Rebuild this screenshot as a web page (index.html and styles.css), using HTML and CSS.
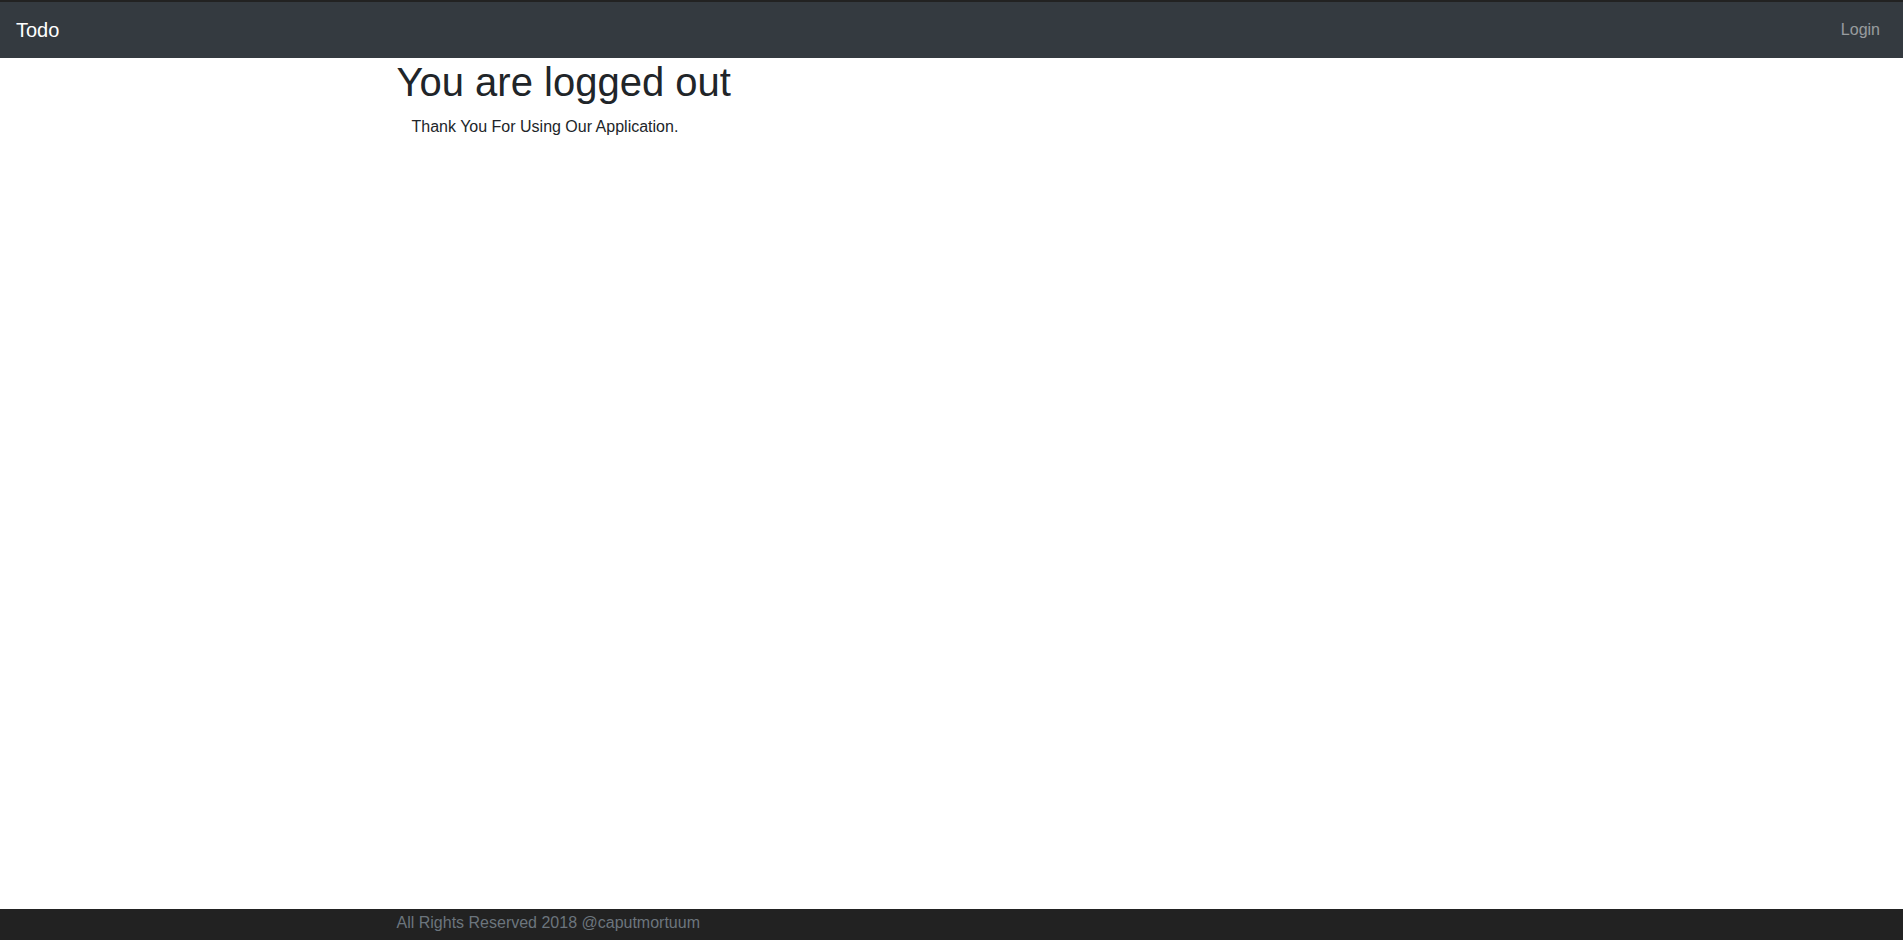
FILE: index.html
```html
<!DOCTYPE html>
<html lang="en">
<head>
<meta charset="utf-8">
<title>Todo</title>
<link rel="stylesheet" href="styles.css">
</head>
<body>
<header class="navbar">
  <a class="brand" href="#">Todo</a>
  <nav class="nav">
    <a class="nav-link" href="#">Login</a>
  </nav>
</header>
<main class="container">
  <h1 class="title">You are logged out</h1>
  <div class="inner">Thank You For Using Our Application.</div>
</main>
<footer class="footer">
  <div class="container">
    <span class="muted">All Rights Reserved 2018 @caputmortuum</span>
  </div>
</footer>
</body>
</html>
```
FILE: styles.css
```css
* { box-sizing: border-box; }
html, body { height: 100%; }
body {
  margin: 0;
  font-family: "Liberation Sans", Arial, sans-serif;
  font-size: 16px;
  line-height: 1.5;
  color: #212529;
  background: #fff;
}
.navbar {
  display: flex;
  align-items: center;
  justify-content: space-between;
  background: #343a40;
  border-top: 2px solid #222;
  padding: 8px 16px;
  height: 58px;
}
.brand {
  color: #fff;
  text-decoration: none;
  font-size: 20px;
  line-height: 30px;
  padding: 5px 0;
}
.nav { display: flex; }
.nav-link {
  color: rgba(255,255,255,.5);
  text-decoration: none;
  padding: 8px 7px 8px 8px;
  line-height: 24px;
}
.container {
  width: 1140px;
  margin: 0 auto;
  padding: 0 15px;
}
.title {
  margin: 0 0 9px;
  font-size: 40px;
  font-weight: 500;
  line-height: 1.2;
}
.inner { padding: 0 15px; }
.footer {
  position: fixed;
  left: 0;
  right: 0;
  bottom: 0;
  height: 31px;
  padding-top: 2px;
  background: #222;
}
.muted { color: #6c757d; line-height: 24px; }
```
